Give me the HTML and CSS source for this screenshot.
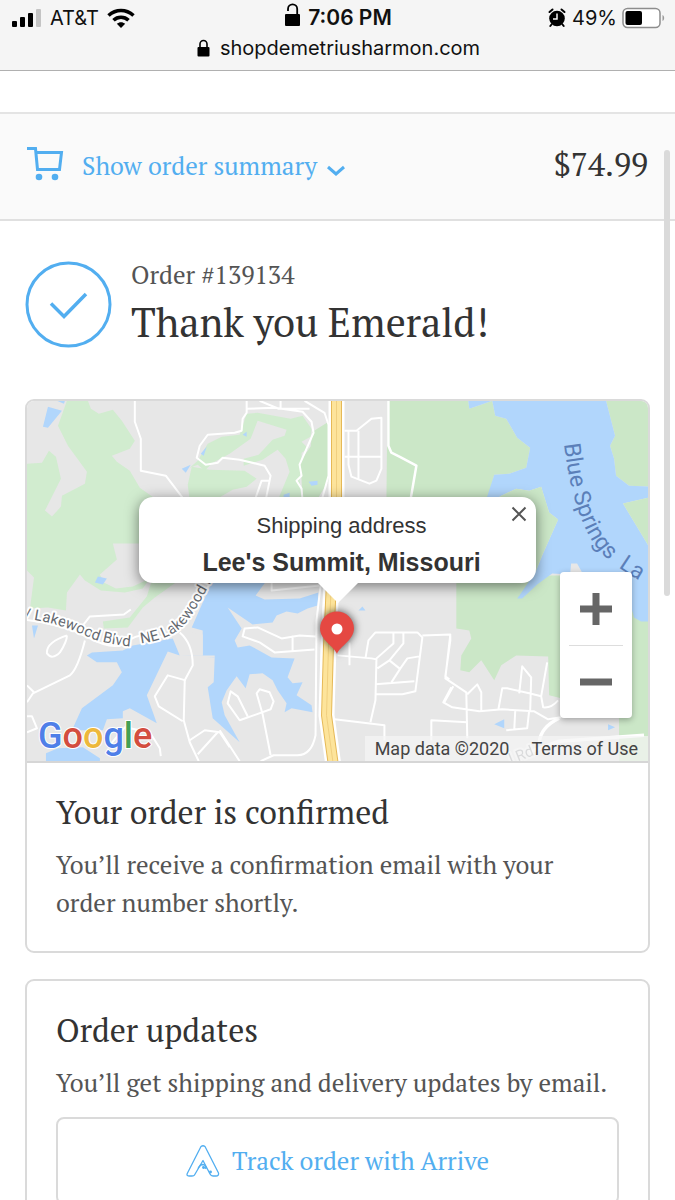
FILE: index.html
```html
<!DOCTYPE html>
<html lang="en">
<head>
    <meta charset="UTF-8">
    <meta name="viewport" content="width=device-width, initial-scale=1.0">
    <title>Thank you Emerald!</title>
    <link rel="stylesheet" href="styles.css">
</head>
<body>
    <!-- Phone status + address bar -->
    <header class="browser-bar">
        <div class="status-row">
            <div class="status-left">
                <svg class="icon" width="30" height="20" viewBox="0 0 30 20" aria-hidden="true">
                    <rect x="0" y="13" width="5" height="6" rx="1"/>
                    <rect x="8" y="9" width="5" height="10" rx="1"/>
                    <rect x="16" y="5" width="5" height="14" rx="1"/>
                    <rect x="24" y="1" width="5" height="18" rx="1" fill="#c4c4c4"/>
                </svg>
                <span>AT&amp;T</span>
                <svg class="icon" width="28" height="20" viewBox="0 0 28 20" aria-hidden="true">
                    <g fill="none" stroke="#000" stroke-width="3.6">
                        <path d="M1.500 7.500C9 .8 19 .8 26.500 7.500"/>
                        <path d="M6.500 12.300c4.200-4 10.800-4 15 0"/>
                    </g>
                    <path d="M9.800 15.800c2.500-2.200 5.900-2.200 8.400 0L14 20z"/>
                </svg>
            </div>
            <div class="status-time">
                <svg class="icon" width="17" height="24" viewBox="0 0 17 24" aria-hidden="true">
                    <rect x="0" y="11" width="15" height="12" rx="1"/>
                    <path d="M3 8V6a4.600 4.600 0 0 1 9.200 0v6" fill="none" stroke="#000" stroke-width="1.800"/>
                </svg>
                <span>7:06 PM</span>
            </div>
            <div class="status-right">
                <svg class="icon" width="20" height="20" viewBox="0 0 20 20" aria-hidden="true">
                    <circle cx="10" cy="10.500" r="7.800"/>
                    <path d="M2.500 4l3-2.500M17.500 4l-3-2.500M4.500 16.500L3.300 18M15.500 16.500l1.200 1.500" stroke="#000" stroke-width="2" stroke-linecap="round"/>
                    <path d="M10 5.500v5.500H6" fill="none" stroke="#f7f7f7" stroke-width="1.500"/>
                </svg>
                <span>49%</span>
                <svg class="icon" width="43" height="22" viewBox="0 0 43 22" aria-hidden="true">
                    <rect x="1" y="1.500" width="37" height="19" rx="4.500" fill="#fff" stroke="#8d8d8d" stroke-width="1.500"/>
                    <rect x="3.500" y="4" width="16.500" height="14" rx="2"/>
                    <path d="M40.500 8c2.200 1 2.200 5 0 6z" fill="#999"/>
                </svg>
            </div>
        </div>
        <div class="address-row">
            <svg class="icon" width="13" height="18" viewBox="0 0 13 18" aria-hidden="true">
                <rect x="0.500" y="8" width="12" height="9.500" rx="1"/>
                <path d="M3 9V5a3.500 3.500 0 0 1 7 0v4" fill="none" stroke="#000" stroke-width="1.600"/>
            </svg>
            <span>shopdemetriusharmon.com</span>
        </div>
    </header>

    <div class="scroll-thumb"></div>

    <div class="order-summary">
        <button type="button" class="summary-toggle">
            <svg width="37" height="35" viewBox="0 0 37 35" fill="none" stroke="#52aef0" stroke-width="3" aria-hidden="true">
                <path d="M0 1.500h8.500l2 21h22L34.500 5.500H9"/>
                <circle cx="12" cy="30" r="3.300" fill="#52aef0" stroke="none"/>
                <circle cx="28" cy="30" r="3.300" fill="#52aef0" stroke="none"/>
            </svg>
            <span class="summary-label">Show order summary</span>
            <svg class="chevron" width="18" height="12" viewBox="0 0 18 12" fill="none" stroke="#52aef0" stroke-width="3" aria-hidden="true">
                <path d="M1 2l8 7 8-7"/>
            </svg>
        </button>
        <span class="total">$74.99</span>
    </div>

    <main class="content">
        <div class="thanks">
            <svg width="87" height="87" viewBox="0 0 87 87" fill="none" stroke="#52aef0" stroke-width="3" aria-hidden="true">
                <circle cx="43.500" cy="43.500" r="41.500"/>
                <path d="M26 42.500L39 55.500 61 33" stroke-width="3.500"/>
            </svg>
            <div>
                <p class="order-number">Order #139134</p>
                <h1>Thank you Emerald!</h1>
            </div>
        </div>

        <section class="card">
            <div class="map">
                <svg class="map-art" viewBox="27 400 622 361" preserveAspectRatio="xMidYMid slice" role="img" aria-label="Map of Lee's Summit, Missouri">
                    <rect x="0" y="380" width="700" height="400" fill="#e7e7e7"/>

                    <!-- parks -->
                    <g fill="#d1eccf">
                        <path d="M67 400H88L91 408 99 413 113 409 122 420 135 440 130 448 112 455 117 461 130 470 140 487 165 505V543H113L117 559 100 574 104 582 116 588 133 586 150 578 143 588 125 592 101 590 85 580 80 574 67 592 66 610 48 607 30 608 34 577 27 570V463L42 462 49 450 56 456 61 478 45 510 52 516 61 506 62 495 85 483 87 471 68 445 58 425Z"/>
                        <path d="M152 580L176 582 155 597 143 607 128 627 104 628 103 621 130 617 147 596Z"/>
                        <path d="M247 413L258 412 291 418 303 415 312 428 311 436 302 441 309 448 302 452 302 462 300 480 303 500H278L290 471 286 458 278 449 263 459 244 465 244 458 259 454 273 439 285 435 287 429 258 420 251 438 230 453 213 462 205 470 198 464 190 467 198 460 208 443 222 436 240 434Z"/>
                        <path d="M192 466L210 469 245 470 257 478 247 486 233 489 214 500H190L188 484Z"/>
                    </g>
                    <g fill="#cbe7c7">
                        <path d="M329 421V480L317 500H303L301 460 311 446 313 431Z"/>
                        <path d="M388 400H469L470 408 493 400 496 415 507 418 518 437 531 447 527 467 510 473 495 474 488 500H387Z"/>
                        <path d="M607 400H650V486L630 485 617 475 615 458 611 445 616 435Z"/>
                        <path d="M457 575H650V761H620V718L562 698 550 695 549 656 517 655 502 665 495 680 482 660 470 672 461 670 462 655 472 638 470 630 457 628Z"/>
                    </g>

                    <!-- lakes -->
                    <g fill="#b1d6fc">
                        <path d="M469 400H607L616 435 611 445 615 458 617 475 630 485 650 486V497L624 503 650 546V621H642L635 617 625 580 583 572 578 563 572 563 571 574 553 573 538 584 523 598 518 598 537 570 543 555 559 519 550 512 542 486 530 490 517 488 502 495 485 505 495 474 510 473 527 467 531 447 518 437 507 418 496 415 493 400 470 408Z"/>
                        <path d="M87 655L92 652 123 650 133 645 173 638 180 655 168 651 147 695 157 723 130 708 123 711 123 718 107 719 103 730H72L82 708 113 685 122 672 117 662 97 662Z"/>
                        <path d="M180 655H203V630L192 627 203 602 213 580H267L256 595 265 599 300 598 319 592 318 605 308 608 298 613 287 611 277 615 273 622 253 624 228 607 242 628 235 640 238 647 250 645 272 657 295 658 288 677 293 683 303 682 297 695 312 705 313 712 292 708 285 712 287 703 278 690 273 680 263 673 250 674 246 688 237 676 227 690 222 702 225 715 240 742 213 718 208 687 214 682 215 657Z"/>
                        <path d="M46 753L58 748 83 747 100 758V762H46ZM48 406L62 410 48 427 43 426ZM57 400H65L64 403ZM32 625H38L34 638ZM98 576L107 578 103 584 95 582ZM182 468L191 464 186 472ZM201 453L207 446 204 455ZM243 434L247 431 247 436ZM309 481L318 480V484L312 485ZM284 494L290 492V498L284 497ZM359 610L363 606 366 610ZM495 724L505 719V728ZM609 724L616 727 609 730Z"/>
                    </g>

                    <!-- east shore, runs behind the popup -->
                    <path d="M485 505L502 495 517 488 530 490 542 486 550 512 559 519 543 555 537 570 520 595H480Z" fill="#cbe7c7"/>
                    <path d="M624 503L650 497V546Z" fill="#cbe7c7"/>

                    <!-- causeway over the lake inlet -->
                    <path d="M181 656H215" stroke="#e7e7e7" stroke-width="2"/>
                    <path d="M180 655V630L203 634V655Z" fill="#e7e7e7"/>

                    <!-- streets -->
                    <g fill="none" stroke="#fff" stroke-width="2" stroke-linejoin="round">
                        <path d="M135 400V421L141 438V470L166 475 185 500"/>
                        <path d="M20 619Q60 622 88 637T128 641 168 638L200 600 215 575M180 632Q193 643 193 665L185 680 184 720 190 742 199 761"/>
                        <path d="M83 625L90 616 124 614 131 609M85 640Q78 668 70 675L33 693 27 702M27 685L34 692M67 635Q46 642 47 653 52 660 60 652 67 641 67 635"/>
                        <path d="M186 680L168 675 155 696 159 706 183 721M27 716H32L37 728 27 732M190 740L205 730 220 732 230 747M218 732L198 754"/>
                        <path d="M247 400V412L243 418 242 430 235 432 208 434 200 445 197 457 206 464 218 462 223 457 240 459 265 465 271 475 266 500M247 408L275 407 303 411 312 421 314 432 300 464 302 475 297 480 302 488 303 500M260 400L279 408 310 408M281 400V407M305 400L325 412 329 424V475L322 500M270 480H262L255 500" />
                        <path d="M345 430H357L372 418 382 417V468L377 480 370 483 352 476 349 464V430M359 430V478M345 456H382"/>
                        <path d="M389 400V445L392 452 400 456 417 465 411 500" stroke-width="2.500"/>
                        <path d="M321 585L317 620 316 735Q312 755 298 755H274L261 761M316 636L300 635 282 638 258 627 245 628 243 636 260 642 275 652 315 649M293 635V650"/>
                        <path d="M271 755L263 714 257 693 260 689 270 692 274 701 271 709 240 720 228 703 231 691 238 696 248 716M220 730L240 761M272 582L272 590 320 585M110 745L125 727 150 732 160 748 161 756"/>
                        <path d="M338 655L372 658 377 659 376 700 371 722M366 658L369 640 376 632H418L423 637 416 691 403 694 377 694M394 632V643L376 659M404 632V643L390 660 378 668M376 684L415 681M390 660L400 668M392 682L401 668 408 658 420 656M350 642V665"/>
                        <path d="M335 719L385 725V740M423 635L451 634 446 678 467 692 468 738M452 687L444 702 453 707 480 711 503 709 535 711 549 719 562 717M468 694L478 684 482 692V710M499 710L503 688 508 688 530 693 542 696 548 662M520 693L523 666 532 677 531 710M542 696L544 707Q552 708 559 700M432 740V720L468 722M451 635V640L446 676 450 679M445 702L454 686M516 711L515 730M530 710L528 728 507 730"/>
                        <path d="M540 743Q541 727 560 718M645 735L560 741 530 752" stroke-width="3.500"/>
                    </g>

                    <!-- highway -->
                    <g fill="none" stroke-linejoin="round">
                        <path d="M337 395V500L332 580 329 645 327 715 334 766" stroke="#fff" stroke-width="16"/>
                        <path d="M337 395V500L332 580 329 645 327 715 334 766" stroke="#e6b957" stroke-width="11"/>
                        <path d="M337 395V500L332 580 329 645 327 715 334 766" stroke="#fde49b" stroke-width="9"/>
                        <path d="M337 395V500L332 580 329 645 327 715 334 766" stroke="#f0cf80" stroke-width="1"/>
                    </g>

                    <!-- place names -->
                    <path id="blvd" d="M24 618Q58 622 87 636Q103 644 140 647" fill="none"/>
                    <path id="lakewood" d="M141 643Q175 639 189 619T221 562" fill="none"/>
                    <path id="springs" d="M565 443C569 480 577 510 589 533S616 567 662 592" fill="none"/>
                    <path id="road" d="M512 764L560 745" fill="none"/>
                    <text class="street-name"><textPath href="#blvd">/ Lakewood Blvd</textPath></text>
                    <text class="street-name"><textPath href="#lakewood">NE Lakewood D</textPath></text>
                    <text class="lake-name"><textPath href="#springs">Blue Springs &nbsp;La</textPath></text>
                    <text class="street-name faded"><textPath href="#road">l Rd</textPath></text>
                </svg>

                <div class="popup-layer">
                    <div class="popup">
                        <p>Shipping address</p>
                        <strong>Lee's Summit, Missouri</strong>
                        <button type="button" class="popup-close" aria-label="Close">
                            <svg width="16" height="16" viewBox="0 0 16 16" stroke="#555" stroke-width="2" aria-hidden="true">
                                <path d="M1.500 1.500l13 13M14.500 1.500l-13 13"/>
                            </svg>
                        </button>
                    </div>
                    <svg class="popup-tip" width="40" height="20" viewBox="0 0 40 20" fill="#fff" aria-hidden="true"><path d="M0 0h40L20 20z"/></svg>
                    <svg class="marker" width="36" height="44" viewBox="0 0 36 44" aria-hidden="true">
                        <path d="M17 43C14.500 35.500 0 29 0 17.500a17 17 0 0 1 34 0C34 29 19.500 35.500 17 43z" fill="#e54842"/>
                        <circle cx="17" cy="18" r="5.500" fill="#fff"/>
                    </svg>
                </div>

                <div class="zoom">
                    <button type="button" aria-label="Zoom in">
                        <svg width="32" height="32" viewBox="0 0 32 32" fill="#666" aria-hidden="true"><path d="M0 12.500h12.500V0h7v12.500H32v7H19.500V32h-7V19.500H0z"/></svg>
                    </button>
                    <button type="button" aria-label="Zoom out">
                        <svg width="32" height="32" viewBox="0 0 32 32" fill="#666" aria-hidden="true"><path d="M0 12.500h32v7H0z"/></svg>
                    </button>
                </div>

                <a href="#" class="google-logo"><span class="g-blue">G</span><span class="g-red">o</span><span class="g-yellow">o</span><span class="g-blue">g</span><span class="g-green">l</span><span class="g-red">e</span></a>
                <div class="attribution">
                    <span>Map data ©2020</span>
                    <a href="#">Terms of Use</a>
                </div>
            </div>
            <div class="card-body">
                <h2>Your order is confirmed</h2>
                <p>You’ll receive a confirmation email with your<br>order number shortly.</p>
            </div>
        </section>

        <section class="card">
            <div class="card-body">
                <h2>Order updates</h2>
                <p>You’ll get shipping and delivery updates by email.</p>
                <a href="#" class="track-btn">
                    <svg width="34" height="32" viewBox="0 0 34 32" fill="none" stroke="#52aef0" stroke-width="1.300" stroke-linejoin="round" aria-hidden="true">
                        <path d="M15 1.500Q17 0 19 1.500L32.500 28Q33 31 30 31H27Q25 31 24 29L17 15.500 8.500 30Q8 31 6 31H3Q0 31 1.500 28Z"/>
                        <path d="M12 23.500Q14 19.500 17 19.500 20 20 20 23.500L18 22.500"/>
                        <circle cx="17.500" cy="22.500" r="0.800" fill="#52aef0"/>
                        <circle cx="24.500" cy="27" r="0.800" fill="#52aef0"/>
                    </svg>
                    <span>Track order with Arrive</span>
                </a>
            </div>
        </section>
    </main>
</body>
</html>
```
FILE: styles.css
```css
* {
    margin: 0;
    padding: 0;
    box-sizing: border-box;
}

body {
    position: relative;
    font-family: "PT Serif", "Liberation Serif", serif;
    font-size: 25px;
    line-height: 38px;
    color: #545454;
    background: #fff;
}

button {
    font: inherit;
    color: inherit;
    background: none;
    border: none;
    cursor: pointer;
}

a {
    color: #52aef0;
    text-decoration: none;
}

svg {
    display: block;
    flex-shrink: 0;
}

/* Browser bar */
.browser-bar {
    padding: 3px 10px 7px 12px;
    font-family: Inter, "Liberation Sans", sans-serif;
    font-size: 20px;
    line-height: 30px;
    color: #111;
    background: #f5f5f5;
    border-bottom: 1px solid #b0b0b0;
}

.status-row {
    display: grid;
    grid-template-columns: 1fr auto 1fr;
}

.status-left,
.status-time,
.status-right,
.address-row {
    display: flex;
    align-items: center;
}

.status-left {
    gap: 8px;
}

.status-time {
    gap: 6px;
    font-size: 21px;
    font-weight: 600;
}

.status-time .icon {
    align-self: flex-start;
}

.status-right {
    justify-content: flex-end;
    gap: 5px;
}

.address-row {
    justify-content: center;
    gap: 10px;
}

.scroll-thumb {
    position: absolute;
    top: 150px;
    right: 5px;
    width: 6px;
    height: 446px;
    border-radius: 3px;
    background: #dadada;
}

/* Order summary */
.order-summary {
    display: flex;
    align-items: center;
    justify-content: space-between;
    margin-top: 41px;
    padding: 29px 27px 34px;
    background: #fafafa;
    border-top: 2px solid #e4e4e4;
    border-bottom: 2px solid #e0e0e0;
}

.summary-toggle {
    display: flex;
    align-items: center;
    color: #52aef0;
}

.summary-label {
    margin: 4px 10px 0 18px;
}

.chevron {
    margin-top: 14px;
}

.total {
    font-size: 32px;
    color: #333;
}

/* Thank you heading */
.content {
    padding: 36px 25px;
}

.thanks {
    display: flex;
    align-items: center;
    gap: 19px;
    margin-bottom: 48px;
}

.order-number {
    line-height: 36px;
}

h1,
h2 {
    font-weight: 400;
    color: #333;
}

h1 {
    font-size: 40px;
    line-height: 58px;
}

h2 {
    margin-bottom: 12px;
    font-size: 32px;
    line-height: 44px;
}

/* Cards */
.card {
    margin-bottom: 26px;
    border: 2px solid #dadada;
    border-radius: 9px;
    overflow: hidden;
}

.card-body {
    padding: 27px 29px 29px;
}

/* Map */
.map {
    position: relative;
    height: 362px;
    border-bottom: 2px solid #d6d6d6;
    font-family: Roboto, sans-serif;
}

.map-art {
    width: 100%;
    height: 100%;
}

.street-name {
    font-size: 15px;
    fill: #656a70;
    stroke: #fff;
    stroke-width: 4px;
    stroke-linejoin: round;
    paint-order: stroke;
}

.faded {
    opacity: 0.6;
}

.lake-name {
    font-size: 23px;
    fill: #5b7fb9;
}

.popup-layer {
    position: absolute;
    inset: 96px 0 0;
    display: flex;
    flex-direction: column;
    align-items: center;
}

.popup {
    position: relative;
    width: 397px;
    padding: 10px 14px 1px 22px;
    font-family: "Liberation Sans", sans-serif;
    font-size: 22px;
    line-height: 37px;
    text-align: center;
    color: #333;
    background: #fff;
    border-radius: 14px;
    box-shadow: 0 3px 14px rgba(0,0,0,0.5);
}

.popup strong {
    font-size: 25px;
}

.popup-close {
    position: absolute;
    top: 9px;
    right: 9px;
}

.popup-tip {
    position: relative;
}

.marker {
    margin-top: 8px;
    filter: drop-shadow(0 0 4px rgba(0,0,0,0.7));
}

.zoom {
    position: absolute;
    right: 16px;
    bottom: 43px;
    padding: 0 9px;
    background: #fff;
    border-radius: 4px;
    box-shadow: 0 2px 6px rgba(0,0,0,0.3);
}

.zoom button {
    display: flex;
    align-items: center;
    justify-content: center;
    width: 54px;
    height: 73px;
}

.zoom button + button {
    border-top: 1px solid #ddd;
}

.google-logo {
    position: absolute;
    left: 11px;
    bottom: 4px;
    font-size: 36px;
    line-height: 42px;
    font-weight: 500;
    -webkit-text-stroke: 2px #fff;
    paint-order: stroke fill;
}

.g-blue { color: #4f7fe8; }
.g-red { color: #d34d3f; }
.g-yellow { color: #edb83c; }
.g-green { color: #43a056; }

.attribution {
    position: absolute;
    right: 0;
    bottom: 0;
    display: flex;
    gap: 22px;
    padding: 0 10px;
    font-size: 18px;
    line-height: 25px;
    color: #444;
    background: rgba(245,245,245,0.7);
}

.attribution a {
    color: #444;
}

/* Track button */
.track-btn {
    display: flex;
    align-items: center;
    justify-content: center;
    gap: 12px;
    margin-top: 15px;
    padding: 23px;
    border: 2px solid #dadada;
    border-radius: 8px;
}
```
